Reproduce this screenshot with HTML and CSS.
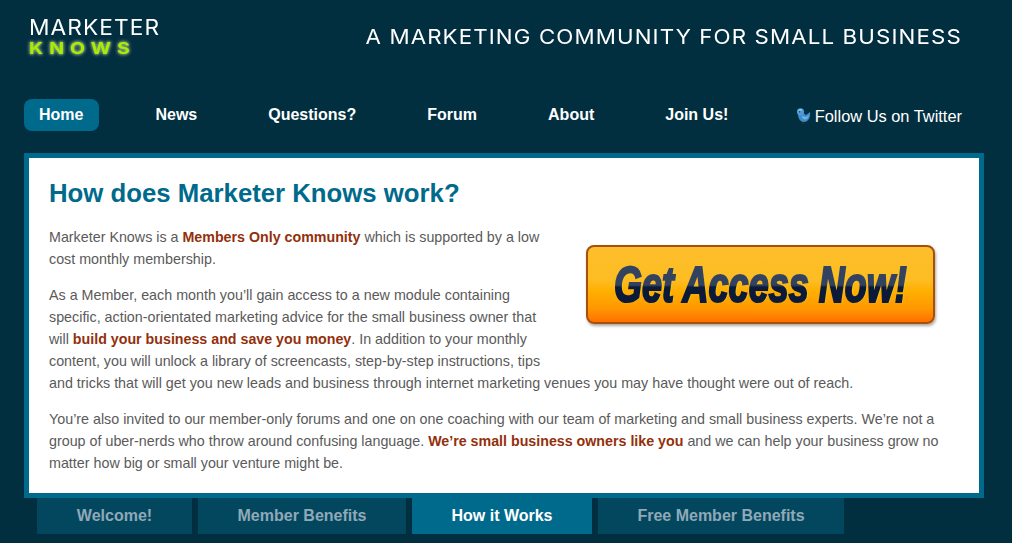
FILE: index.html
```html
<!DOCTYPE html>
<html>
<head>
<title>Marketer Knows - How does Marketer Knows work?</title>
<link rel="stylesheet" href="styles.css">
</head>
<body>

	<div class="header">
		<div class="logo">
			<div class="logo-top">MARKETER</div>
			<div class="logo-bottom">KNOWS</div>
		</div>
		<div class="tagline">A MARKETING COMMUNITY FOR SMALL BUSINESS</div>
	</div>

	<div class="nav">
		<a class="nav-item active">Home</a>
		<a class="nav-item">News</a>
		<a class="nav-item">Questions?</a>
		<a class="nav-item">Forum</a>
		<a class="nav-item">About</a>
		<a class="nav-item">Join Us!</a>
		<a class="twitter">
			<svg class="bird" width="15" height="16" viewBox="0 0 15 16">
				<rect x="6" y="13" width="2" height="3" fill="#3a2c18"/>
				<path d="M2 7 L6 4 L10 7 L14 4 C15 9 12 14 8 14 C4.5 14 2.5 11 2 7 Z" fill="#3d8ccb"/>
				<circle cx="4.5" cy="3.8" r="3.6" fill="#4f9cd6"/>
				<path d="M6 8 L10 9 L13 7.5 C12.5 10 10.5 11.5 8.5 11.5 C7 11 6 9.5 6 8 Z" fill="#6fb5e4"/>
				<path d="M2.5 1.5 L6 1 L6 2.6 L2.5 2.8 Z" fill="#93cbec"/>
				<rect x="3" y="3.2" width="1.2" height="1.2" fill="#12384f"/>
			</svg>
			Follow Us on Twitter
		</a>
	</div>

	<div class="box">
		<h1>How does Marketer Knows work?</h1>

		<a class="access-btn"><span class="access-text">Get Access Now!</span></a>

		<p>Marketer Knows is a <b>Members Only community</b> which is supported by a low cost monthly membership.</p>

		<p>As a Member, each month you’ll gain access to a new module containing specific, action-orientated marketing advice for the small business owner that will <b>build your business and save you money</b>. In addition to your monthly content, you will unlock a library of screencasts, step-by-step instructions, tips and tricks that will get you new leads and business through internet marketing venues you may have thought were out of reach.</p>

		<p>You’re also invited to our member-only forums and one on one coaching with our team of marketing and small business experts. We’re not a group of uber-nerds who throw around confusing language. <b>We’re small business owners like you</b> and we can help your business grow no matter how big or small your venture might be.</p>
	</div>

	<div class="tabs">
		<a class="tab tab-welcome">Welcome!</a>
		<a class="tab tab-benefits">Member Benefits</a>
		<a class="tab tab-works active">How it Works</a>
		<a class="tab tab-free">Free Member Benefits</a>
	</div>

</body>
</html>
```

FILE: styles.css
```css
body
   {
	margin			:  0 ;
	height			:  543px ;
	overflow		:  hidden ;
	background		:  #012f40 ;
	font-family		:  "Liberation Sans", Arial, sans-serif ;
    }

.header
   {
	display			:  flex ;
	justify-content		:  space-between ;
	height			:  99px ;
	padding			:  0 50px 0 29px ;
	color			:  #ffffff ;
    }

.logo
   {
	padding-top		:  16px ;
    }

.logo-top
   {
	font-family		:  Inter, sans-serif ;
	font-weight		:  400 ;
	font-size		:  21px ;
	line-height		:  24px ;
	letter-spacing		:  1px ;
	transform		:  scaleX(1.08) ;
	transform-origin	:  left ;
    }

.logo-bottom
   {
	font-family		:  Inter, sans-serif ;
	font-weight		:  700 ;
	font-size		:  16px ;
	line-height		:  16px ;
	letter-spacing		:  5px ;
	color			:  #a2f000 ;
	text-shadow		:  0 0 4px #8f9f80, 0 0 3px #8f9f80, 0 0 2px #8f9f80 ;
	transform		:  scaleX(1.22) ;
	transform-origin	:  left ;
    }

.tagline
   {
	font-family		:  Inter, sans-serif ;
	font-weight		:  400 ;
	font-size		:  20px ;
	line-height		:  24px ;
	letter-spacing		:  1px ;
	padding-top		:  25px ;
	transform		:  scaleX(1.115) ;
	transform-origin	:  right ;
    }

.nav
   {
	display			:  flex ;
	align-items		:  flex-start ;
	gap			:  41px ;
	height			:  54px ;
	padding			:  0 50px 0 24px ;
    }

.nav-item
   {
	padding			:  7px 15px ;
	border-radius		:  8px ;
	font-size		:  16px ;
	font-weight		:  bold ;
	line-height		:  18px ;
	color			:  #ffffff ;
    }

.nav-item.active
   {
	background		:  #006a8c ;
	padding-right		:  16px ;
    }

.twitter
   {
	display			:  flex ;
	align-items		:  center ;
	gap			:  4px ;
	margin-left		:  auto ;
	padding-top		:  8px ;
	font-size		:  16.4px ;
	line-height		:  18px ;
	color			:  #ffffff ;
    }

.box
   {
	height			:  335px ;
	margin			:  0 28px 0 24px ;
	padding			:  0 20px 0 20px ;
	border			:  5px solid #006a8c ;
	background		:  #ffffff ;
	font-size		:  14.3px ;
	line-height		:  22px ;
	color			:  #5a5a5a ;
    }

.box h1
   {
	margin			:  0 ;
	padding			:  20px 0 18px ;
	font-size		:  25.75px ;
	line-height		:  30px ;
	color			:  #006a8c ;
    }

.box p
   {
	margin			:  0 0 14px ;
    }

.box b
   {
	font-size		:  14.24px ;
	color			:  #93300c ;
    }

.access-btn
   {
	float			:  right ;
	display			:  flex ;
	align-items		:  center ;
	justify-content		:  center ;
	box-sizing		:  border-box ;
	width			:  349px ;
	height			:  79px ;
	margin			:  19px 24px 34px 36px ;
	border			:  2px solid #a5500f ;
	border-radius		:  8px ;
	background		:  linear-gradient(#fdbf2c 0%, #fdbc22 45%, #ffb000 58%, #ff9800 82%, #ff7000 100%) ;
	box-shadow		:  1px 2px 3px #b0a8a0 ;
	overflow		:  hidden ;
    }

.access-text
   {
	font-size		:  50px ;
	font-weight		:  bold ;
	font-style		:  italic ;
	line-height		:  56px ;
	white-space		:  nowrap ;
	color			:  transparent ;
	background		:  linear-gradient(#33425f 0%, #33425f 50%, #0a1a38 54%, #0a1a38 100%) ;
	-webkit-background-clip	:  text ;
	background-clip		:  text ;
	-webkit-text-stroke	:  2.2px transparent ;
	filter			:  drop-shadow(1px 0 0 #f2c81e) ;
	transform		:  scaleX(0.72) ;
    }

.tabs
   {
	display			:  flex ;
	gap			:  6px ;
	padding-left		:  37px ;
    }

.tab
   {
	height			:  36px ;
	font-size		:  16px ;
	font-weight		:  bold ;
	line-height		:  35px ;
	text-align		:  center ;
	background		:  #03475f ;
	color			:  #8fa9b8 ;
    }

.tab.active
   {
	background		:  #006a8c ;
	color			:  #ffffff ;
    }

.tab-welcome  { width : 155px ; }
.tab-benefits { width : 208px ; }
.tab-works    { width : 180px ; }
.tab-free     { width : 246px ; }
```
